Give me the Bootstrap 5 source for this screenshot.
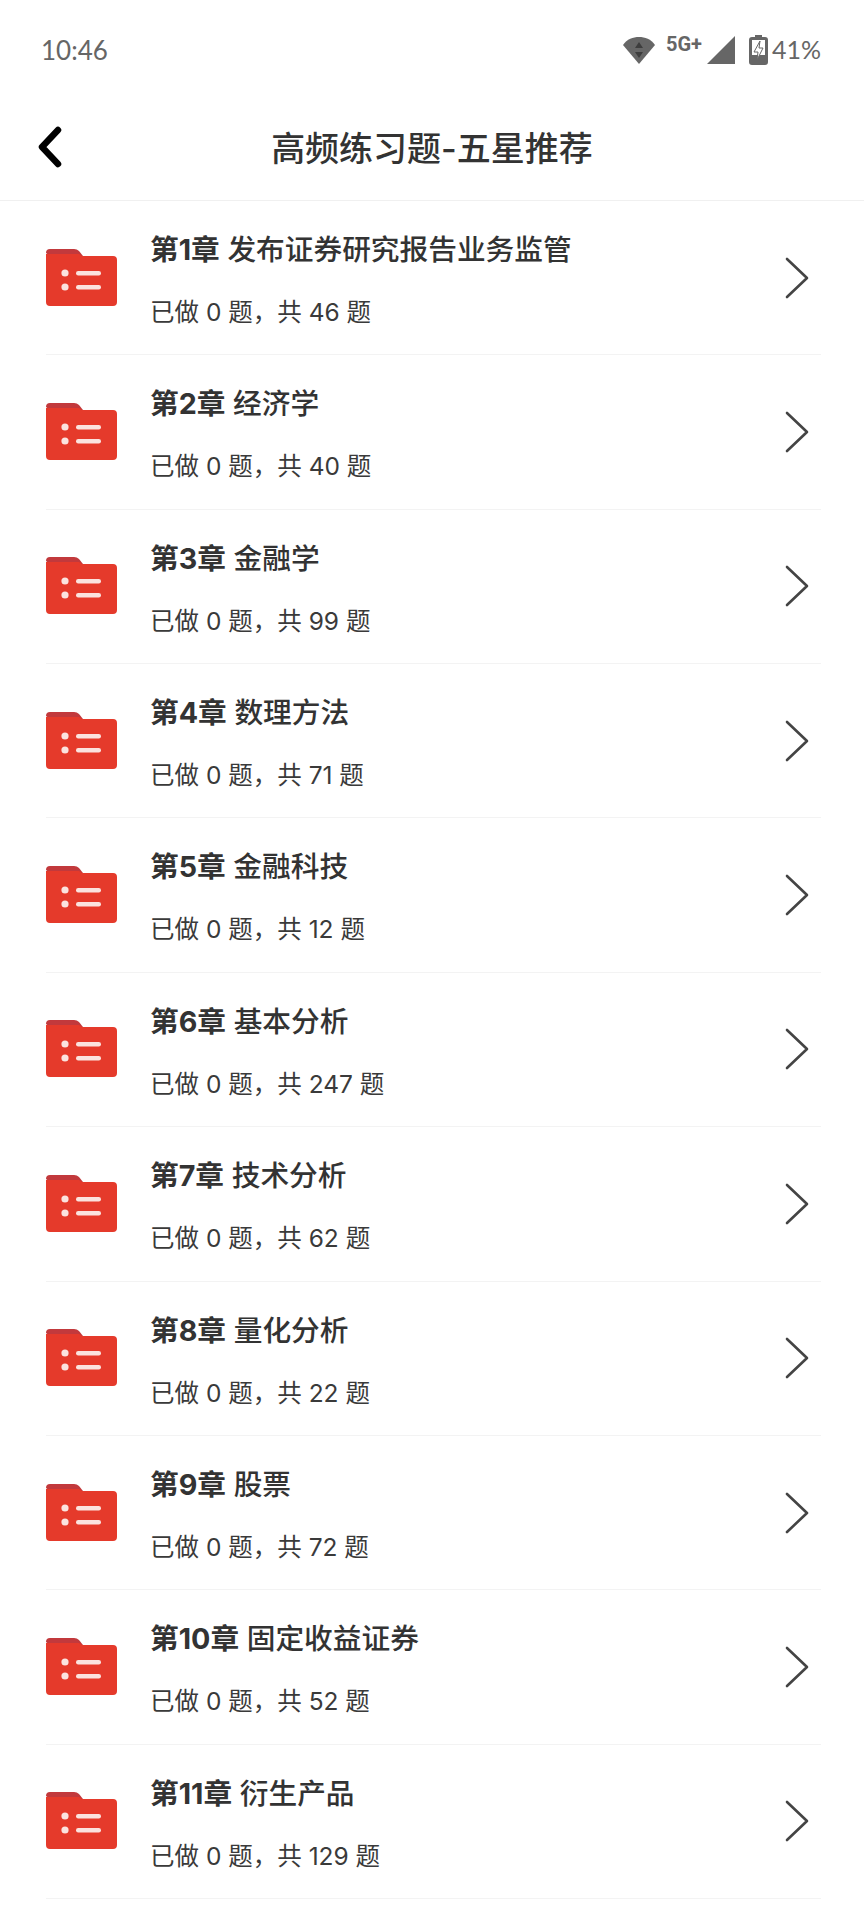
<!DOCTYPE html>
<html>
  <head>
    <title>高频练习题-五星推荐</title>
    <link href="https://cdn.jsdelivr.net/npm/bootstrap@5.3.3/dist/css/bootstrap.min.css" rel="stylesheet">
    <script src="https://cdn.jsdelivr.net/npm/bootstrap@5.3.3/dist/js/bootstrap.bundle.min.js"></script>
    <style>
      body { background: #fff; font-family: "Inter", "Noto Sans CJK SC", sans-serif; color: #333; height: 1920px; overflow: hidden; }
      .status-bar { height: 100px; padding: 0 43px 0 41px; color: #666; font-size: 26px; font-family: "Lato", "Noto Sans", sans-serif; }
      .status-five { font-size: 20px; font-weight: 700; margin: -13px 5px 0 10px; font-family: "Roboto", sans-serif; }
      .status-batt { margin-left: 13px; }
      .status-pct { font-size: 25px; margin-left: 4px; }
      .top-bar { height: 101px; border-bottom: 1px solid #f0f0f0; }
      .back-btn { left: 35px; top: 26px; }
      .top-title { font-size: 34px; font-weight: 500; line-height: 1; color: #333; margin-top: -2px; }
      .chapter-list { padding: 0 43px 0 46px; }
      .chapter-row { height: 154.36px; border-bottom: 1px solid #f3f3f3; }
      .chapter-icon { width: 71px; margin-right: 33px; margin-top: 0; }
      .chapter-title { font-size: 28.7px; font-weight: 500; line-height: 40px; color: #333; margin-top: 29px; }
      .chapter-title b { font-weight: 700; }
      .chapter-sub { font-size: 24.5px; line-height: 34px; color: #3a3a3a; margin-top: 25px; font-weight: 400; }
      .chapter-arrow { margin-right: 11px; margin-top: 0; }
    </style>
  </head>
  <body>
    <div class="status-bar d-flex align-items-center justify-content-between">
      <span>10:46</span>
      <div class="d-flex align-items-center">
        <svg width="34" height="29" viewBox="0 0 34 29">
          <path d="M17 28 L1 9 C5 3 11 1 17 1 C23 1 29 3 33 9 Z" fill="#666"/>
          <path d="M17 6 L21 12 H13 Z M17 22 L13 16 H21 Z" fill="#3d3d3d"/>
        </svg>
        <span class="status-five">5G+</span>
        <svg width="29" height="28" viewBox="0 0 29 28"><path d="M28 0 V28 H0 Z" fill="#666"/></svg>
        <svg width="19" height="30" viewBox="0 0 19 30" class="status-batt">
          <path d="M6 0 H13 V2 H16 Q19 2 19 5 V27 Q19 30 16 30 H3 Q0 30 0 27 V5 Q0 2 3 2 H6 Z" fill="#666"/>
          <path d="M3 5 H16 V20 H3 Z" fill="#fff"/>
          <path d="M11 6 L5 17 H9 L8 25 L14 13 H10 Z" fill="#fff" stroke="#666" stroke-width="1"/>
        </svg>
        <span class="status-pct">41%</span>
      </div>
    </div>

    <header class="top-bar position-relative d-flex align-items-center justify-content-center">
      <svg class="back-btn position-absolute" width="28" height="42" viewBox="0 0 28 42">
        <path d="M23 4 L7 21 L23 38" fill="none" stroke="#000" stroke-width="6.5" stroke-linecap="round" stroke-linejoin="round"/>
      </svg>
      <div class="top-title">高频练习题-五星推荐</div>
    </header>

    <main class="chapter-list" id="chapterList"></main>

    <script>
      const chapters = [
        ['第1章', '发布证券研究报告业务监管', 46],
        ['第2章', '经济学', 40],
        ['第3章', '金融学', 99],
        ['第4章', '数理方法', 71],
        ['第5章', '金融科技', 12],
        ['第6章', '基本分析', 247],
        ['第7章', '技术分析', 62],
        ['第8章', '量化分析', 22],
        ['第9章', '股票', 72],
        ['第10章', '固定收益证券', 52],
        ['第11章', '衍生产品', 129]
      ];

      const folderIcon = `
        <svg class="chapter-icon flex-shrink-0" width="71" height="58" viewBox="0 0 71 58">
          <path d="M0 4 Q0 0 4 0 H28 Q31 0 33 2 L37 7 H4 Z" fill="#c2393c"/>
          <path d="M0 5 H33 L36 7 H67 Q71 7 71 11 V53 Q71 57 67 57 H4 Q0 57 0 53 Z" fill="#e53a2b"/>
          <circle cx="19" cy="24" r="3.6" fill="#fbe3df"/>
          <circle cx="19" cy="38" r="3.6" fill="#fbe3df"/>
          <rect x="30" y="22" width="25" height="4.4" rx="2.2" fill="#fbe3df"/>
          <rect x="30" y="36" width="25" height="4.4" rx="2.2" fill="#fbe3df"/>
        </svg>`;

      const arrowIcon = `
        <svg class="chapter-arrow flex-shrink-0" width="26" height="44" viewBox="0 0 26 44">
          <path d="M3 3 L23 22 L3 41" fill="none" stroke="#444" stroke-width="2.6" stroke-linecap="round" stroke-linejoin="round"/>
        </svg>`;

      // Build the chapter rows
      document.getElementById('chapterList').innerHTML = chapters.map(c => `
        <div class="chapter-row d-flex align-items-center">
          ${folderIcon}
          <div class="flex-grow-1 align-self-start">
            <div class="chapter-title"><b>${c[0]}</b> ${c[1]}</div>
            <div class="chapter-sub">已做 0 题，共 ${c[2]} 题</div>
          </div>
          ${arrowIcon}
        </div>`).join('');
    </script>
  </body>
</html>
